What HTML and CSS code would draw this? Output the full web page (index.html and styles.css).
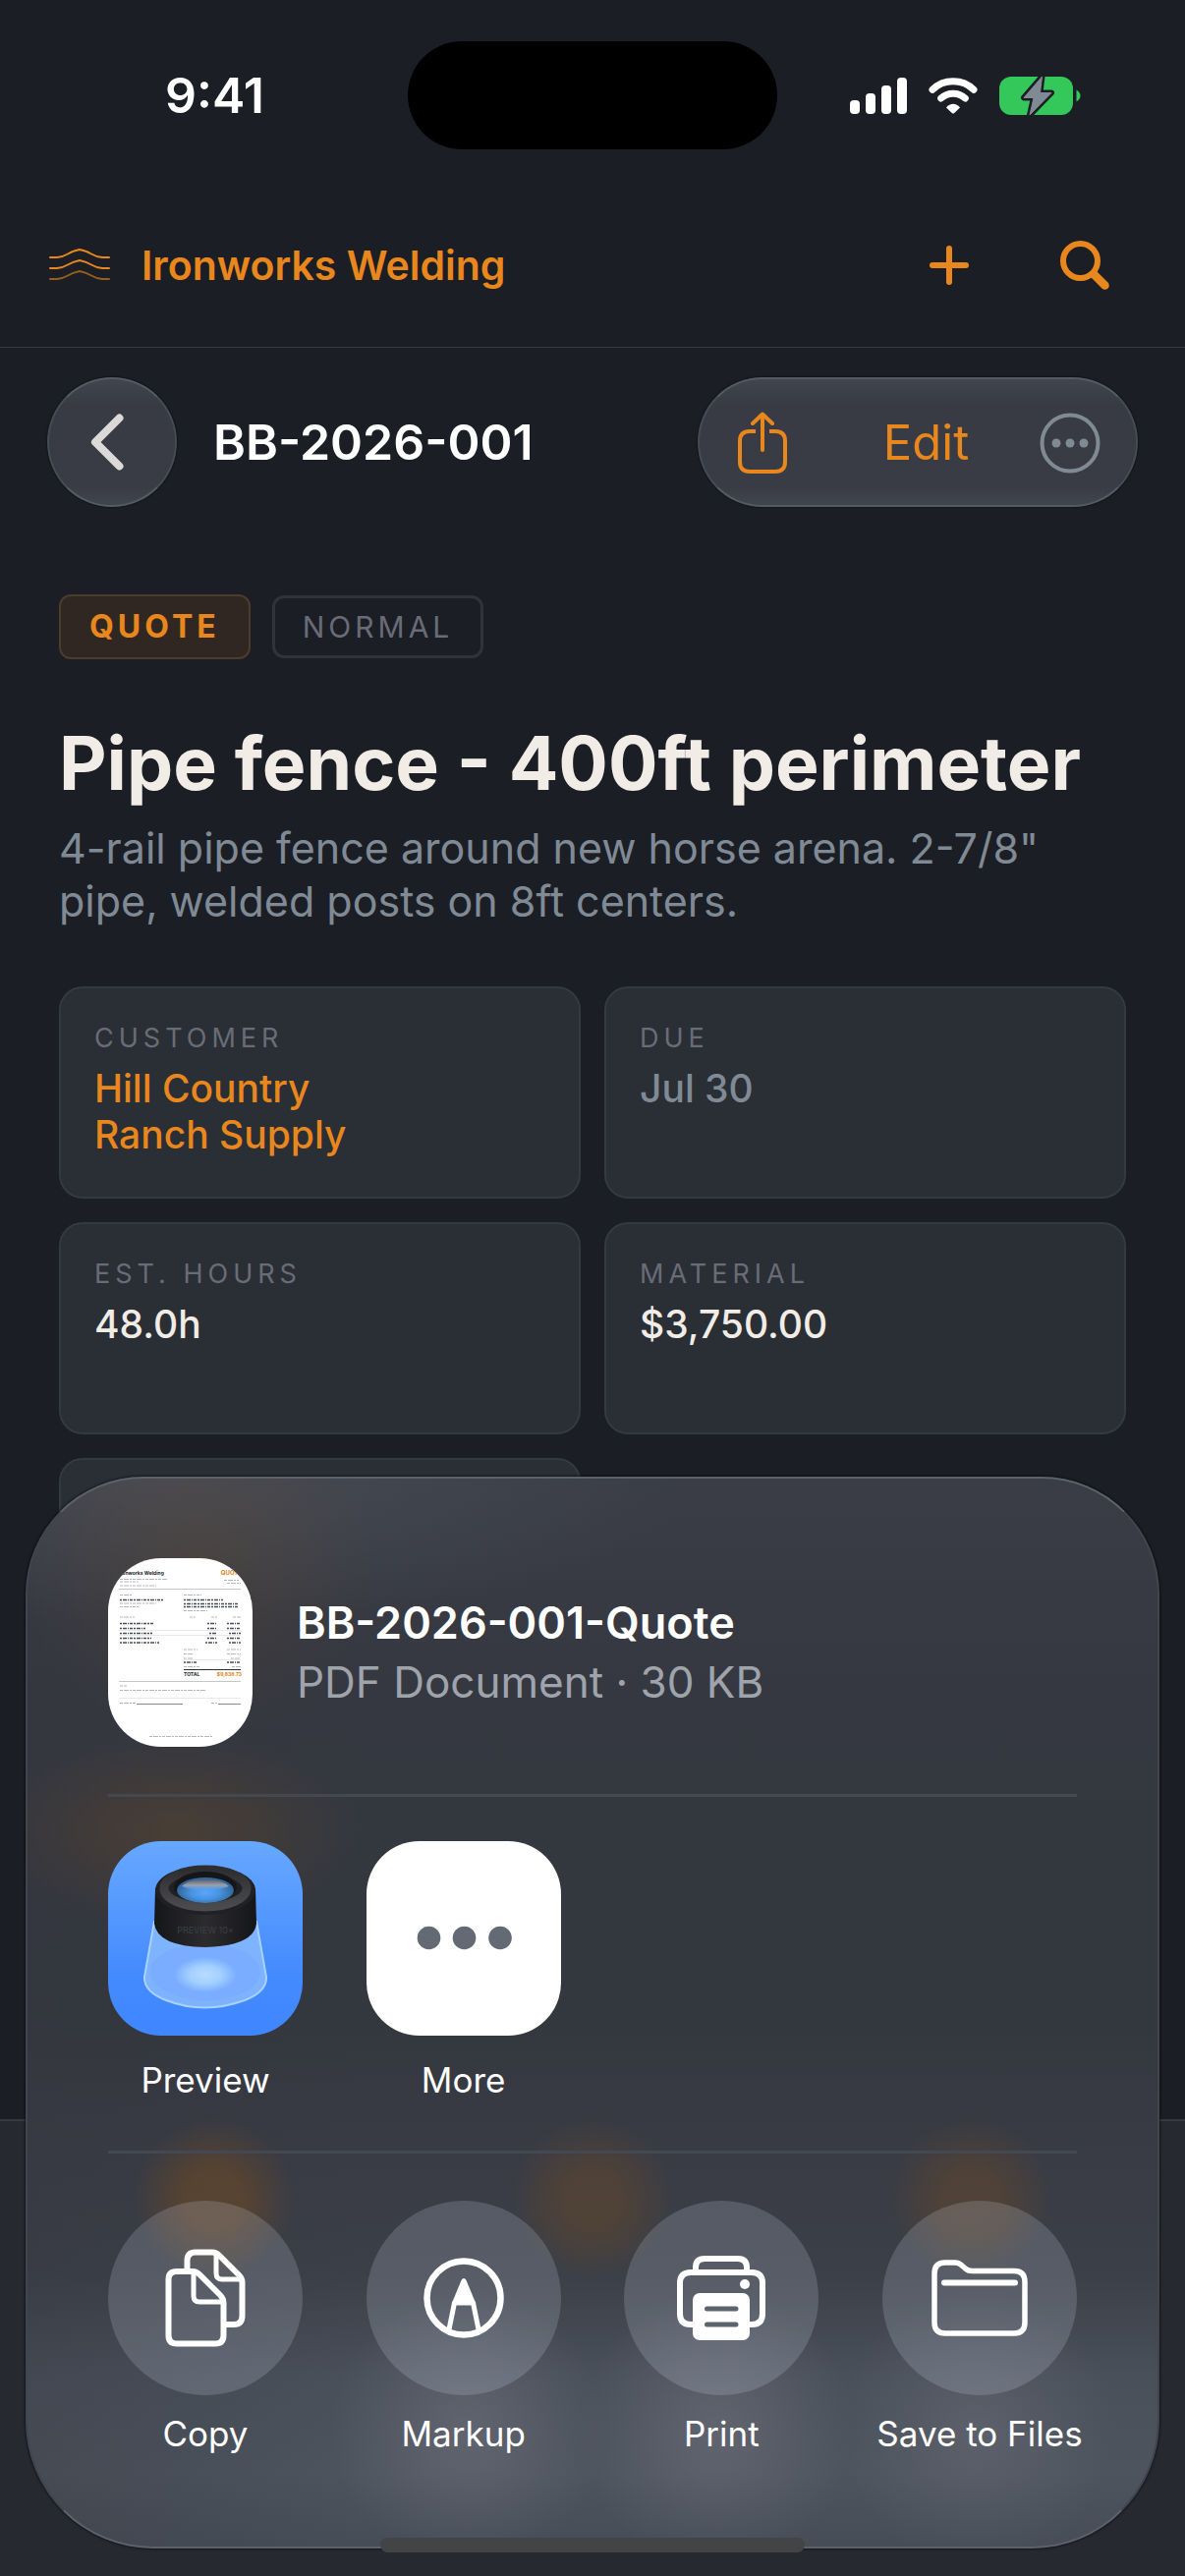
FILE: index.html
```html
<!DOCTYPE html>
<html lang="en">
<head>
<meta charset="utf-8">
<meta name="viewport" content="width=device-width, initial-scale=1">
<title>BB-2026-001</title>
<link rel="stylesheet" href="styles.css">
</head>
<body>
<div class="screen">
  <div class="status-bar">
    <span class="status-time">9:41</span>
    <span class="island"></span>
    <span class="status-icons">
      <svg width="58" height="37" viewBox="0 0 58 37" fill="#fff" aria-hidden="true">
        <rect x="0" y="23" width="10" height="14" rx="4"/>
        <rect x="16" y="16" width="10" height="21" rx="4"/>
        <rect x="32" y="8" width="10" height="29" rx="4"/>
        <rect x="48" y="0" width="10" height="37" rx="4"/>
      </svg>
      <svg width="50" height="37" viewBox="0 0 50 37" fill="none" stroke="#fff" stroke-width="7" stroke-linecap="round" aria-hidden="true">
        <path d="M4 12.200C15.500 .9 34.500 .9 46 12.200"/>
        <path d="M12.700 21C19.500 14.700 30.500 14.700 37.300 21"/>
        <path d="M18 30.500C22 25.500 28 25.500 32 30.500L26 36.200Q25 37 24 36.200Z" fill="#fff" stroke="none"/>
      </svg>
      <svg width="83" height="41" viewBox="0 0 83 41" aria-hidden="true">
        <rect x="0" y="1" width="75" height="39" rx="12" fill="#34c759"/>
        <path d="M78.500 14.500Q82.500 17 82.500 20.500T78.500 26.500Z" fill="#34c759"/>
        <path d="M43.500 1L25 22.500H35L31 40L53 17.500H41.500Z" fill="#808a95" stroke="#1c1e26" stroke-width="6" stroke-linejoin="round"/>
        <path d="M43.500 1L25 22.500H35L31 40L53 17.500H41.500Z" fill="#808a95" stroke="#808a95" stroke-width="1" stroke-linejoin="round"/>
      </svg>
    </span>
  </div>

  <header class="app-bar">
    <a class="brand" href="#home">
      <svg width="64" height="36" viewBox="0 0 64 36" fill="none" stroke="#e8871e" stroke-width="2" stroke-linecap="round" aria-hidden="true">
        <path d="M2 10H9Q15 9.500 20 6.500T32 2Q39 3.500 44 6.500T55 10H62"/>
        <path d="M2 21H9Q15 20.500 20 17.500T32 13Q39 14.500 44 17.500T55 21H62"/>
        <path d="M2 32H9Q15 31.500 20 28.500T32 24Q39 25.500 44 28.500T55 32H62" opacity=".6"/>
      </svg>
      <span>Ironworks Welding</span>
    </a>
    <div class="app-actions">
      <button type="button" class="icon-button" aria-label="Add">
        <svg width="40" height="40" viewBox="0 0 40 40" fill="none" stroke="#e8871e" stroke-width="6" stroke-linecap="round"><path d="M20 3V37M3 20H37"/></svg>
      </button>
      <button type="button" class="icon-button" aria-label="Search">
        <svg width="50" height="50" viewBox="0 0 50 50" fill="none" stroke="#e8871e" stroke-linecap="round"><circle cx="20.500" cy="20.500" r="17.500" stroke-width="6"/><path d="M34 34L45.500 45.500" stroke-width="8.500"/></svg>
      </button>
    </div>
  </header>

  <nav class="nav-row">
    <button type="button" class="glass back" aria-label="Back">
      <svg width="34" height="58" viewBox="0 0 34 58" fill="none" stroke="#dcdad8" stroke-width="8" stroke-linecap="round" stroke-linejoin="round"><path d="M29.500 4.500L5 29L29.500 53.500"/></svg>
    </button>
    <h1 class="nav-title">BB-2026-001</h1>
    <div class="glass toolbar">
      <button type="button" class="icon-button" aria-label="Share">
        <svg width="50" height="64" viewBox="0 0 50 64" fill="none" stroke="#e8871e" stroke-width="4" stroke-linecap="round" stroke-linejoin="round"><path d="M25 39V3M15 12L25 2.500L35 12"/><path d="M18 20H12Q2 20 2 30V51Q2 61 12 61H38Q48 61 48 51V30Q48 20 38 20H32" stroke-linecap="butt"/></svg>
      </button>
      <button type="button" class="edit">Edit</button>
      <button type="button" class="icon-button" aria-label="More options">
        <svg width="62" height="62" viewBox="0 0 62 62"><circle cx="31" cy="31" r="28.500" fill="none" stroke="#808a95" stroke-width="4"/><g fill="#808a95"><circle cx="17" cy="31" r="4.500"/><circle cx="31" cy="31" r="4.500"/><circle cx="45" cy="31" r="4.500"/></g></svg>
      </button>
    </div>
  </nav>

  <main class="content">
    <div class="badges">
      <span class="badge badge-quote">QUOTE</span>
      <span class="badge badge-priority">NORMAL</span>
    </div>
    <h2 class="job-title">Pipe fence - 400ft perimeter</h2>
    <p class="job-text">4-rail pipe fence around new horse arena. 2-7/8" pipe, welded posts on 8ft centers.</p>
    <div class="cards">
      <section class="card">
        <h3 class="card-label">CUSTOMER</h3>
        <a class="card-value accent" href="#customer">Hill Country<br>Ranch Supply</a>
      </section>
      <section class="card">
        <h3 class="card-label">DUE</h3>
        <p class="card-value muted">Jul 30</p>
      </section>
      <section class="card">
        <h3 class="card-label">EST. HOURS</h3>
        <p class="card-value">48.0h</p>
      </section>
      <section class="card">
        <h3 class="card-label">MATERIAL</h3>
        <p class="card-value">$3,750.00</p>
      </section>
      <section class="card"></section>
    </div>
  </main>

  <div class="tab-bar"></div>

  <div class="sheet" role="dialog" aria-label="Share">
    <div class="sheet-head">
      <svg class="thumb" viewBox="0 0 147 192" aria-hidden="true">
        <rect width="147" height="192" fill="#fff"/>
        <g class="doc-text">
          <text x="11" y="17" class="doc-brand">Ironworks Welding</text>
          <text x="136" y="17" class="doc-quote" text-anchor="end">QUOTE</text>
        </g>
        <g stroke="#b4b6bb" stroke-width="1" stroke-dasharray="3 1 5 1 2 1">
          <path d="M12 21.500H60M12 24H31M12 28H49M118 22.500H133M121 25.500H135"/>
          <path d="M12 37.500H24M77 37.500H95M12 46H49M12 49.500H31M77 53.500H101M12 60H27M83 60H89M105 60H111M127 60H135"/>
          <path d="M77 93H91M121 93H135M77 97.500H86M121 97.500H135M77 102H86M125 102H135M77 110.500H94M126 110.500H135"/>
          <path d="M12 130H19M12 134.500H100M12 147.500H28M105 147.500H111M42 181.500H106"/>
        </g>
        <g stroke="#4a4d55" stroke-width="1.500" stroke-dasharray="2 1 4 1 1 1 3 1">
          <path d="M12 42.500H57M77 42.500H117M77 46.500H133M77 49.500H133"/>
          <path d="M12 66.500H46M101 66.500H111M121 66.500H135M12 71.500H38M101 71.500H111M121 71.500H135M12 76.500H45M103 76.500H111M123 76.500H135M12 81.500H44M101 81.500H111M121 81.500H135M12 86H52M99 86H111M123 86H135M77 106H91M121 106H135"/>
        </g>
        <g stroke="#c4c6ca"><path d="M11 31.500H135M11 125.500H135" stroke-width="1"/><path d="M11 73.500H135M11 78.500H135M77 103.500H135M11 142.500H135" stroke-width=".4"/><path d="M29 148.500H76M112 148.500H135" stroke="#85888e"/></g>
        <path d="M77 113.500H135" stroke="#2b2e36" stroke-width="1"/>
        <text x="77" y="120" class="doc-total">TOTAL</text>
        <text x="136" y="120" class="doc-amount" text-anchor="end">$9,838.73</text>
      </svg>
      <div class="sheet-file">
        <p class="file-name">BB-2026-001-Quote</p>
        <p class="file-info">PDF Document · 30 KB</p>
      </div>
    </div>

    <div class="sheet-row apps">
      <button type="button" class="share-item">
        <svg class="share-icon" viewBox="0 0 198 198" aria-hidden="true">
          <defs>
            <linearGradient id="appBlue" x2="0" y2="1"><stop offset="0" stop-color="#66a8ff"/><stop offset=".7" stop-color="#448aff"/><stop offset="1" stop-color="#3f86ff"/></linearGradient>
            <radialGradient id="spot"><stop offset="0" stop-color="#b9dbff"/><stop offset=".5" stop-color="#a3d0ff"/><stop offset="1" stop-color="#a3d0ff" stop-opacity="0"/></radialGradient>
            <linearGradient id="barrel"><stop offset="0" stop-color="#15161a"/><stop offset=".5" stop-color="#2c2b2d"/><stop offset="1" stop-color="#15161a"/></linearGradient>
            <linearGradient id="ring" x2="0" y2="1"><stop offset="0" stop-color="#2e2e30"/><stop offset="1" stop-color="#4b4b4e"/></linearGradient>
            <radialGradient id="lens" cy=".6"><stop offset="0" stop-color="#5ca5ff"/><stop offset=".5" stop-color="#4794e0"/><stop offset="1" stop-color="#34679c"/></radialGradient>
            <linearGradient id="shine" x2="0" y2="1"><stop offset="0" stop-color="#5b6068"/><stop offset=".5" stop-color="#9aa2ad"/><stop offset="1" stop-color="#5ca5ff" stop-opacity="0"/></linearGradient>
          </defs>
          <rect width="198" height="198" fill="url(#appBlue)"/>
          <path d="M47 82L37 138Q36 153 59 162Q98 177 139 162Q162 153 161 138L151 82Z" fill="#84b7ff" fill-opacity=".9" stroke="#a8d2ff" stroke-width="2"/>
          <ellipse cx="99" cy="133" rx="56" ry="29" fill="#7aadff"/>
          <ellipse cx="99" cy="136" rx="32" ry="18" fill="url(#spot)"/>
          <path d="M48 48L47 84Q50 107 99 108Q148 107 151 84L150 48Z" fill="url(#barrel)"/>
          <ellipse cx="99" cy="50" rx="51" ry="25" fill="#202125"/>
          <ellipse cx="99" cy="48" rx="42" ry="19" fill="none" stroke="url(#ring)" stroke-width="9"/>
          <ellipse cx="99" cy="47" rx="32" ry="16" fill="#15161a"/>
          <ellipse cx="99" cy="50" rx="29" ry="13" fill="url(#lens)"/>
          <path d="M75 46Q82 39 99 39T123 46Q112 51 99 51T75 46Z" fill="url(#shine)"/>
          <text x="99" y="94" class="barrel-text" text-anchor="middle">PREVIEW 10×</text>
        </svg>
        <span class="share-label">Preview</span>
      </button>
      <button type="button" class="share-item">
        <svg class="share-icon" viewBox="0 0 198 198" aria-hidden="true"><rect width="198" height="198" fill="#fff"/><g fill="#646a73"><circle cx="63.500" cy="98.500" r="11.800"/><circle cx="99.500" cy="98.500" r="11.800"/><circle cx="136" cy="98.500" r="11.800"/></g></svg>
        <span class="share-label">More</span>
      </button>
    </div>

    <div class="sheet-row actions">
      <button type="button" class="share-item">
        <span class="share-circle">
          <svg width="82" height="100" viewBox="0 0 82 100" fill="none" stroke="#fff" stroke-width="6" stroke-linejoin="round" aria-hidden="true">
            <path d="M22.500 20V12Q22.500 3.500 31 3.500H48Q52 3.500 55 6.500L75 26.500Q78.500 30 78.500 34V68Q78.500 77 70 77H61"/>
            <path d="M52 4V25Q52 31 58 31H77" stroke-width="5"/>
            <path d="M3.500 31Q3.500 23 12 23H28Q32 23 35 26L56 47Q59.500 50.500 59.500 55V88Q59.500 96.500 51 96.500H12Q3.500 96.500 3.500 88Z"/>
            <path d="M29 24V48Q29 54 35 54H58" stroke-width="5"/>
          </svg>
        </span>
        <span class="share-label">Copy</span>
      </button>
      <button type="button" class="share-item">
        <span class="share-circle">
          <svg width="82" height="82" viewBox="0 0 82 82" fill="none" stroke="#fff" aria-hidden="true">
            <circle cx="41" cy="41" r="37.500" stroke-width="6.500"/>
            <path d="M26 73L31.500 46H50.500L56 73" stroke-width="5" stroke-linejoin="round"/>
            <path d="M38.500 23Q41 19 43.500 23L53 46V48H29V46Z" fill="#fff" stroke="none"/>
          </svg>
        </span>
        <span class="share-label">Markup</span>
      </button>
      <button type="button" class="share-item">
        <span class="share-circle">
          <svg width="90" height="86" viewBox="0 0 90 86" aria-hidden="true">
            <g fill="none" stroke="#fff" stroke-width="6"><path d="M19 16V12Q19 3 28 3H62Q71 3 71 12V16"/><path d="M20 70H14Q3 70 3 59V28Q3 17 14 17H76Q87 17 87 28V59Q87 70 76 70H70"/></g>
            <circle cx="69" cy="29" r="5" fill="#fff"/>
            <rect x="16" y="38" width="58" height="48" rx="7" fill="#fff"/>
            <path d="M30.500 54H60M30.500 70H60" stroke="#5d636c" stroke-width="5" stroke-linecap="round"/>
          </svg>
        </span>
        <span class="share-label">Print</span>
      </button>
      <button type="button" class="share-item">
        <span class="share-circle">
          <svg width="98" height="78" viewBox="0 0 98 78" fill="none" stroke="#fff" stroke-linejoin="round" aria-hidden="true">
            <path d="M3 14Q3 3 14 3H24Q28 3 31 6L35 9.500Q37.500 11.500 41 11.500H84Q95 11.500 95 22.500V64Q95 75 84 75H14Q3 75 3 64Z" stroke-width="5.500"/>
            <path d="M13 23.500H85" stroke-width="6" stroke-linecap="round"/>
          </svg>
        </span>
        <span class="share-label">Save to Files</span>
      </button>
    </div>
  </div>
  <div class="home-indicator"></div>
</div>
</body>
</html>
```

FILE: styles.css
```css
:root {
  --bg: #1b1e25;
  --card: #2a2e35;
  --line: #363941;
  --accent: #e8871e;
  --muted: #808a95;
  --dim: #696c77;
  --cream: #f1ede6;
}

* { box-sizing: border-box; }

body {
  margin: 0;
  background: var(--bg);
  color: #fff;
  font-family: Inter, "Liberation Sans", sans-serif;
}

h1, h2, h3, p { margin: 0; }

a { color: inherit; text-decoration: none; }

button {
  padding: 0;
  border: 0;
  background: none;
  color: inherit;
  font: inherit;
}

svg { display: block; }

.screen {
  position: relative;
  display: flex;
  flex-direction: column;
  min-height: 100vh;
}

/* Status bar */
.status-bar {
  display: grid;
  grid-template-columns: 247px auto 1fr;
  align-items: center;
  padding: 42px 106px 35px 168px;
}

.status-time {
  font-size: 50px;
  line-height: 60px;
  font-weight: 600;
}

.island {
  width: 376px;
  height: 110px;
  border-radius: 55px;
  background: #000;
}

.status-icons {
  display: flex;
  align-items: center;
  justify-content: flex-end;
  gap: 22px;
}

/* App bar */
.app-bar {
  display: flex;
  align-items: center;
  justify-content: space-between;
  height: 167px;
  padding: 0 77px 0 49px;
  border-bottom: 1px solid var(--line);
}

.brand {
  display: flex;
  align-items: center;
  gap: 31px;
  color: var(--accent);
  font-size: 41px;
  line-height: 50px;
  font-weight: 600;
}

.app-actions {
  display: flex;
  align-items: center;
  gap: 93px;
}

/* Navigation row */
.nav-row {
  display: flex;
  align-items: center;
  padding: 30px 48px 0;
}

.glass {
  border: 2px solid #555a64;
  border-right-color: #474b55;
  border-left-color: #474b55;
  border-radius: 66px;
  background: linear-gradient(#41454d, #383b43 20%, #393c45 85%, #41454d);
  box-shadow: 0 0 2px #000;
}

.back {
  display: flex;
  align-items: center;
  justify-content: center;
  width: 132px;
  height: 132px;
  padding-right: 10px;
}

.nav-title {
  flex: 1;
  padding-left: 37px;
  font-size: 50px;
  line-height: 60px;
  font-weight: 600;
}

.toolbar {
  display: flex;
  align-items: center;
  justify-content: space-between;
  width: 448px;
  height: 132px;
  padding: 2px 36px 0 39px;
}

.edit {
  padding-left: 26px;
  color: var(--accent);
  font-size: 49px;
  line-height: 60px;
}

/* Job */
.content { padding: 89px 60px 0; }

.badges {
  display: flex;
  align-items: center;
  gap: 22px;
}

.badge {
  border-radius: 12px;
  letter-spacing: 4px;
}

.badge-quote {
  padding: 12px 29px;
  border: 2px solid #4c3c2d;
  background: #302722;
  color: var(--accent);
  font-size: 32px;
  line-height: 38px;
  font-weight: 700;
}

.badge-priority {
  padding: 11px 28px;
  border: 3px solid #30333b;
  color: var(--dim);
  font-size: 30px;
  line-height: 36px;
  font-weight: 400;
}

.job-title {
  margin-top: 61px;
  color: var(--cream);
  font-size: 75px;
  line-height: 90px;
  font-weight: 700;
}

.job-text {
  margin-top: 14px;
  color: var(--muted);
  font-size: 43px;
  line-height: 54px;
}

.cards {
  display: grid;
  grid-template-columns: 1fr 1fr;
  gap: 24px;
  margin-top: 60px;
}

.card {
  min-height: 216px;
  padding: 35px 34px;
  border: 2px solid var(--line);
  border-radius: 24px;
  background: var(--card);
}

.card-label {
  color: var(--dim);
  font-size: 27px;
  line-height: 32px;
  font-weight: 400;
  letter-spacing: 5px;
}

.card-value {
  display: block;
  margin-top: 11px;
  color: var(--cream);
  font-size: 39px;
  line-height: 47px;
  font-weight: 500;
}

.accent { color: var(--accent); }
.muted { color: var(--muted); }

.tab-bar {
  height: 465px;
  margin-top: auto;
  border-top: 2px solid var(--line);
  background: #262930;
}

/* Share sheet */
.sheet {
  position: absolute;
  right: 26px;
  bottom: 28px;
  left: 26px;
  padding: 81px 82px 93px;
  border: 2px solid #5c616b;
  border-right-color: #42454e;
  border-left-color: #42454e;
  border-radius: 120px 120px 130px 130px;
  background:
    radial-gradient(circle 180px at 15% 8%, rgba(105, 75, 40, .26), transparent),
    radial-gradient(ellipse 190px 100px at 13% 33%, rgba(110, 75, 35, .36), transparent),
    radial-gradient(circle 82px at 16.500% 67.500%, rgba(105, 72, 38, .62) 35%, transparent),
    radial-gradient(circle 82px at 50% 67.500%, rgba(98, 70, 42, .52) 35%, transparent),
    radial-gradient(circle 82px at 83.500% 67.500%, rgba(98, 70, 42, .52) 35%, transparent),
    radial-gradient(circle 140px at 39% 89%, rgba(125, 125, 138, .42), transparent),
    radial-gradient(circle 140px at 61% 89%, rgba(125, 125, 138, .42), transparent),
    radial-gradient(circle 140px at 84% 89%, rgba(125, 125, 138, .32), transparent),
    radial-gradient(ellipse 540px 150px at 12% 0%, rgba(80, 84, 94, .6), transparent),
    linear-gradient(to right, rgba(52, 53, 62, .3), transparent 30%),
    linear-gradient(#3a3d46, #353840 20%, #33373e 50%, #3a3c45 64%, #3b3f47 74%, #49505a 84%, #4d545d 93%, #464d56);
  box-shadow: 0 0 3px #000;
}

.sheet-head {
  display: flex;
  align-items: center;
  gap: 45px;
  padding-bottom: 48px;
}

.thumb {
  width: 147px;
  height: 192px;
  border-radius: 54px;
}

.doc-brand, .doc-quote, .doc-total, .doc-amount { font-weight: 700; }
.doc-brand { fill: #22252d; font-size: 5px; }
.doc-quote { fill: #e07d12; font-size: 6px; }
.doc-total { fill: #22252d; font-size: 5px; }
.doc-amount { fill: #e07d12; font-size: 5px; }

.file-name, .file-info {
  font-size: 44px;
  line-height: 60px;
}

.file-name {
  font-size: 45px;
  font-weight: 600;
}

.file-info { color: #9fa3ab; }

.sheet-row {
  display: grid;
  grid-template-columns: repeat(4, 198px);
  justify-content: space-between;
  border-top: 3px solid #444851;
}

.apps { padding: 45px 0 50px; }
.actions { padding-top: 48px; }

.share-item {
  display: flex;
  flex-direction: column;
  align-items: center;
  gap: 23px;
}

.actions .share-item { gap: 17px; }

.share-icon {
  width: 198px;
  height: 198px;
  border-radius: 54px;
}

.barrel-text {
  fill: #3c3f46;
  font-size: 9px;
}

.share-circle {
  display: flex;
  align-items: center;
  justify-content: center;
  width: 198px;
  height: 198px;
  border-radius: 50%;
  background: rgba(225, 240, 255, .17);
}

.share-label {
  font-size: 35px;
  line-height: 44px;
  white-space: nowrap;
}

.home-indicator {
  position: absolute;
  bottom: 24px;
  left: 50%;
  width: 432px;
  height: 15px;
  margin-left: -216px;
  border-radius: 8px;
  background: #434446;
}
```
